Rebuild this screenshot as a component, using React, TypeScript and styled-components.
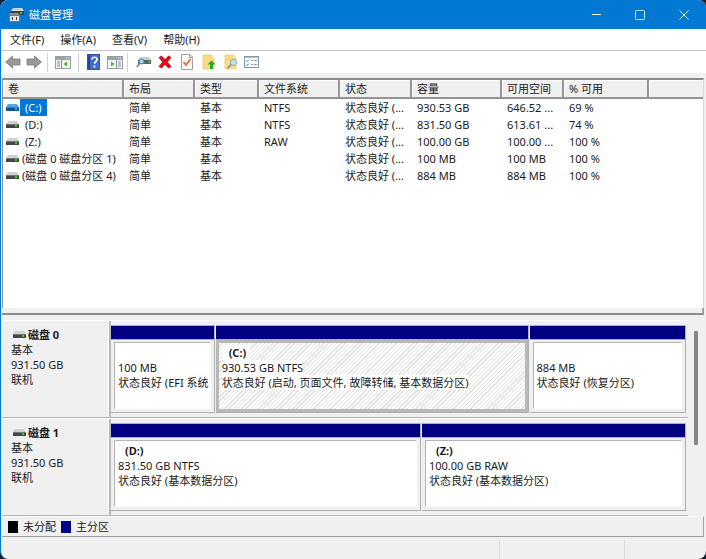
import React from 'react';
import styled, { createGlobalStyle, css } from 'styled-components';

const Global = createGlobalStyle`
  * { box-sizing: border-box; }
  html, body, #root { height: 100%; margin: 0; }
  body { background: #14202e; color: #1a1a1a; font: 11px/15px "Noto Sans", "Noto Sans CJK SC", sans-serif; }
  button { font: inherit; color: inherit; border: 0; padding: 0; background: none; }
`;

const Window = styled.div`
  height: 100vh;
  display: flex;
  flex-direction: column;
  background: #f0f0f0;
  border-left: 1px solid #0078d7;
  border-radius: 8px;
  overflow: hidden;
`;
const TitleBar = styled.header`
  height: 29px;
  flex: none;
  display: flex;
  align-items: center;
  background: #0078d4;
  color: #fff;
  padding-left: 7px;
  h1 { flex: 1; margin: 0 0 0 5px; font-size: 11px; font-weight: 400; }
`;
const Caption = styled.button`
  width: 44px;
  height: 29px;
  display: grid;
  place-items: center;
`;
const MenuBar = styled.nav`
  height: 22px;
  flex: none;
  display: flex;
  align-items: center;
  gap: 16px;
  padding-left: 9px;
  background: #fff;
  border-bottom: 1px solid #c4c4c4;
`;
const ToolBar = styled.div`
  height: 22px;
  flex: none;
  display: flex;
  align-items: center;
  padding-left: 4px;
  background: #fff;
`;
const Tool = styled.button<{ $w?: number }>`
  width: ${p => p.$w ?? 22}px;
  height: 20px;
  display: grid;
  place-items: center;
`;
const Separator = styled.span<{ $gap?: number }>`
  width: 1px;
  height: 19px;
  background: #d0d0d0;
  margin: 0 ${p => p.$gap ?? 0}px;
`;
const ListPane = styled.section`
  flex: 1 1 0;
  min-height: 0;
  margin: 5px 2px 0 1px;
  border: solid #8c8c8c;
  border-width: 2px 0 0 1px;
  border-right: 1px solid #d8d8d8;
  background: #fff;
  overflow: hidden;
`;
const Volumes = styled.table`
  width: 100%;
  table-layout: fixed;
  border-collapse: separate;
  border-spacing: 0;
  th {
    height: 19px;
    padding: 0 0 0 5px;
    text-align: left;
    font-weight: 400;
    background: #f0f0f0;
    border-right: 2px solid #949494;
    border-bottom: 2px solid #949494;
    box-shadow: inset 1px 1px #fff;
  }
  th:last-child { border-right: 0; }
  td { height: 17px; padding: 0 0 0 5px; white-space: nowrap; }
  td:first-child { padding-left: 3px; }
`;
const VolumeName = styled.span<{ $selected?: boolean; $long?: boolean }>`
  display: flex;
  align-items: center;
  gap: 1px;
  span {
    padding: 1px 5px 1px ${p => (p.$long ? 2 : 5)}px;
    ${p => p.$selected && css`background: #0078d7; color: #fff;`}
  }
`;
const Splitter = styled.div`
  height: 7px;
  flex: none;
  margin: 0 2px 0 1px;
  border-bottom: 2px solid #8c8c8c;
  border-right: 2px solid #a0a0a0;
`;
const DiskPane = styled.section`
  flex: none;
  display: flex;
  margin-left: 1px;
`;
const Disks = styled.div`
  flex: 1;
  min-width: 0;
  padding-top: 5px;
`;
const Disk = styled.article`
  height: 98px;
  display: flex;
  border-top: 1px solid #fff;
  border-bottom: 1px solid #b4b4b4;
`;
const DiskInfo = styled.div`
  width: 109px;
  flex: none;
  padding: 6px 0 0 9px;
  border-right: 2px solid #b8b8b8;
  box-shadow: inset -1px 0 #fff;
  h2 { margin: 0; font-size: 11px; line-height: 15px; display: flex; align-items: center; gap: 2px; padding-left: 2px; }
  p { margin: 0; }
`;
const Partitions = styled.div`
  flex: 1;
  min-width: 0;
  display: flex;
  gap: 1px;
  padding: 4px 2px 4px 0;
`;
const Partition = styled.div<{ $grow: number }>`
  flex: ${p => p.$grow} 1 0;
  min-width: 0;
  display: flex;
  flex-direction: column;
  border-right: 1px solid #b0b0b0;
  border-bottom: 1px solid #b0b0b0;
`;
const Band = styled.div`
  height: 15px;
  flex: none;
  background: #000080;
  border: 1px solid #b0b0b0;
  border-width: 1px 0;
`;
const Body = styled.div<{ $selected?: boolean }>`
  flex: 1;
  padding: 2px 3px 0;
  margin: 2px 3px 3px;
  overflow: hidden;
  white-space: nowrap;
  background: #fff;
  border: 1px solid #b4b4b4;
  border-right-color: #fff;
  border-bottom-color: #fff;
  ${p => p.$selected && css`
    margin: 0;
    padding: 2px 3px 0;
    border: 3px solid #b8b8b8;
    background: repeating-linear-gradient(135deg, #fff 0 2px, #e0e0e0 2px 3px);
  `}
`;
const Line = styled.div<{ $title?: boolean }>`
  height: 15px;
  span { display: inline-block; background: #fff; ${p => p.$title && css`padding: 0 4px 0 7px; font-weight: 700;`} }
`;
const ScrollTrack = styled.div`
  width: 18px;
  flex: none;
  padding: 16px 0 0 6px;
`;
const Thumb = styled.div`
  width: 4px;
  height: 114px;
  border-radius: 1px;
  background: #858585;
`;
const Legend = styled.div`
  height: 21px;
  flex: none;
  display: flex;
  align-items: center;
  gap: 5px;
  padding-left: 6px;
  margin: 0 2px 0 1px;
  border-top: 1px solid #fff;
  border-right: 1px solid #a0a0a0;
  border-bottom: 1px solid #a0a0a0;
`;
const Swatch = styled.i<{ $color: string }>`
  width: 10px;
  height: 12px;
  background: ${p => p.$color};
`;
const StatusBar = styled.footer`
  height: 22px;
  flex: none;
  display: grid;
  grid-template-columns: 1fr 125px 81px;
  padding-top: 3px;
  span { border-right: 1px solid #dcdcdc; }
  span:last-child { border: 0; }
`;

const DriveIcon = ({ blue = false }: { blue?: boolean }) => (
  <svg width="13" height="9" viewBox="0 0 13 9" aria-hidden="true">
    <path d="M2 1h9l2 3H0z" fill={blue ? '#5ba4e0' : '#d0d0d0'} />
    <rect y="4" width="13" height="4" rx="0.5" fill={blue ? '#0c5796' : '#454545'} />
    <rect y="4" width="13" height="1" fill={blue ? '#2780c8' : '#777'} />
    <rect x="9" y="5" width="2" height="2" fill={blue ? '#2fb4b0' : '#2bd02b'} />
  </svg>
);
const AppIcon = () => (
  <svg width="16" height="16" viewBox="0 0 16 16" aria-hidden="true">
    <path d="M5 1h9l2 3H3z" fill="#d0d4d6" />
    <path d="M3 4h13v4H3z" fill="#3f4346" />
    <path d="M12 5h2v2h-2z" fill="#36c13a" />
    <path d="M2 6h8l2 3H1z" fill="#8c9092" />
    <path d="M1.500 8.500h10v6h-10z" fill="#e4e4e4" stroke="#777" />
    <path d="M4 10h1v3H4zM8 10h1v3H8z" fill="#444" />
  </svg>
);
const Arrow = ({ right = false }: { right?: boolean }) => (
  <svg width="16" height="14" viewBox="0 0 16 14" aria-hidden="true">
    <path d={right ? 'M15.500 7 8.500 1v3H1v6h7.500v3z' : 'M.5 7 7.500 1v3H15v6H7.500v3z'} fill="#999" stroke="#777" strokeWidth="0.8" />
  </svg>
);
const PaneIcon = ({ right = false }: { right?: boolean }) => (
  <svg width="16" height="13" viewBox="0 0 16 13" aria-hidden="true">
    <rect x="0.500" y="0.500" width="15" height="12" fill="#f4f4f4" stroke="#98a0a6" />
    <path d="M1 1h14v3H1z" fill="#9ba3ab" />
    <path d="M11 2h1M13 2h1" stroke="#fff" />
    <path d={right ? 'M11 6h3M11 8h3M11 10h3' : 'M2 6h3M2 8h3M2 10h3'} stroke="#8a929a" />
    <path d={right ? 'M9.500 4v8' : 'M6.500 4v8'} stroke="#8a929a" />
    <path d={right ? 'M4 5.500v5L7.500 8z' : 'M12 5.500v5L8.500 8z'} fill="#3cb62c" />
  </svg>
);
const HelpIcon = () => (
  <svg width="13" height="16" viewBox="0 0 13 16" aria-hidden="true">
    <rect x="0.500" y="0.500" width="12" height="15" fill="#4169cf" stroke="#3355a8" />
    <path d="M1 1h2v14H1z" fill="#2646a0" />
    <path d="M5 5.500C5 2.500 10 2.500 10 5.500c0 2-2.500 2-2.500 4.300M7.500 11.500v2" fill="none" stroke="#fff" strokeWidth="1.700" />
  </svg>
);
const ConnectIcon = () => (
  <svg width="15" height="12" viewBox="0 0 15 12" aria-hidden="true">
    <path d="M4 1h9l2 3H2z" fill="#c8ced2" />
    <path d="M2 4h13v4H2z" fill="#56646b" />
    <path d="M12 5h2v2h-2z" fill="#2bd02b" />
    <circle cx="5.500" cy="5.500" r="2.500" fill="#a8d2ea" stroke="#5a7f98" />
    <path d="M3.500 7.500.8 11" stroke="#77838a" strokeWidth="1.600" />
  </svg>
);
const DeleteIcon = () => (
  <svg width="14" height="14" viewBox="0 0 14 14" aria-hidden="true">
    <path d="M3.500.500 7 4.300 10.500.500 13.500 2.500 9.700 7 13.500 11.500 10.500 13.500 7 9.700 3.500 13.500.500 11.500 4.300 7 .500 2.500z" fill="#d8101c" />
  </svg>
);
const CheckIcon = () => (
  <svg width="12" height="16" viewBox="0 0 12 16" aria-hidden="true">
    <path d="M.5.500H9l2.500 2.500v12.500H.5z" fill="#fafafa" stroke="#a0a0a0" />
    <path d="M8.500.500V3.500h3" fill="none" stroke="#a0a0a0" />
    <path d="m2.500 8 2.500 3 4.500-6" fill="none" stroke="#ee6c35" strokeWidth="1.800" />
  </svg>
);
const FolderIcon = ({ search = false }: { search?: boolean }) => (
  <svg width="14" height="16" viewBox="0 0 14 16" aria-hidden="true">
    <path d="M1 1h9v3h2v11H1z" fill="#f8dc80" stroke="#e8cb78" strokeWidth="0.800" />
    {search ? (
      <g>
        <path d="M7 10.500 3.500 14.500" stroke="#8a9298" strokeWidth="1.800" />
        <circle cx="9.500" cy="8.500" r="3" fill="#c6e3f4" stroke="#86a7bb" />
      </g>
    ) : (
      <path d="M9.500 6.500 13.500 10.500H11V15H8v-4.500H5.500z" fill="#27ad27" />
    )}
  </svg>
);
const ListIcon = () => (
  <svg width="15" height="12" viewBox="0 0 15 12" aria-hidden="true">
    <rect x="0.500" y="0.500" width="14" height="11" fill="#fff" stroke="#8497a8" />
    <path d="M1 1.500h13" stroke="#b4c0ca" />
    <path d="m2 4.500 1 1 2-2M2 8.500l1 1 2-2" fill="none" stroke="#2f76bd" />
    <path d="M7 4.500h2M10 4.500h3M7 8.500h2M10 8.500h3" stroke="#8b98a3" />
  </svg>
);

const columns: [string, number | undefined][] = [
  ['卷', 121], ['布局', 71], ['类型', 64], ['文件系统', 81], ['状态', 72],
  ['容量', 90], ['可用空间', 62], ['% 可用', 85], ['', undefined],
];
const volumes = [
  ['(C:)', '简单', '基本', 'NTFS', '状态良好 (...', '930.53 GB', '646.52 ...', '69 %'],
  ['(D:)', '简单', '基本', 'NTFS', '状态良好 (...', '831.50 GB', '613.61 ...', '74 %'],
  ['(Z:)', '简单', '基本', 'RAW', '状态良好 (...', '100.00 GB', '100.00 ...', '100 %'],
  ['(磁盘 0 磁盘分区 1)', '简单', '基本', '', '状态良好 (...', '100 MB', '100 MB', '100 %'],
  ['(磁盘 0 磁盘分区 4)', '简单', '基本', '', '状态良好 (...', '884 MB', '884 MB', '100 %'],
];
type Part = { grow: number; title?: string; size: string; status: string; selected?: boolean };
const disks: { name: string; parts: Part[] }[] = [
  {
    name: '磁盘 0',
    parts: [
      { grow: 103, size: '100 MB', status: '状态良好 (EFI 系统' },
      { grow: 313, title: '(C:)', size: '930.53 GB NTFS', status: '状态良好 (启动, 页面文件, 故障转储, 基本数据分区)', selected: true },
      { grow: 156, size: '884 MB', status: '状态良好 (恢复分区)' },
    ],
  },
  {
    name: '磁盘 1',
    parts: [
      { grow: 310, title: '(D:)', size: '831.50 GB NTFS', status: '状态良好 (基本数据分区)' },
      { grow: 264, title: '(Z:)', size: '100.00 GB RAW', status: '状态良好 (基本数据分区)' },
    ],
  },
];

export default function App() {
  return (
    <>
      <Global />
      <Window>
        <TitleBar>
          <AppIcon />
          <h1>磁盘管理</h1>
          <Caption aria-label="最小化"><svg width="9" height="9"><path d="M0 4.500h9" stroke="#fff" /></svg></Caption>
          <Caption aria-label="最大化"><svg width="10" height="10"><rect x="0.500" y="0.500" width="9" height="9" rx="1" fill="none" stroke="#d4e8f8" /></svg></Caption>
          <Caption aria-label="关闭"><svg width="10" height="10"><path d="m.5.500 9 9m0-9-9 9" stroke="#e4f0fa" /></svg></Caption>
        </TitleBar>
        <MenuBar>
          {['文件(F)', '操作(A)', '查看(V)', '帮助(H)'].map(m => <button key={m}>{m}</button>)}
        </MenuBar>
        <ToolBar>
          <Tool $w={16} aria-label="后退"><Arrow /></Tool>
          <Tool $w={26} aria-label="前进"><Arrow right /></Tool>
          <Separator />
          <Tool $w={30} aria-label="显示控制台树"><PaneIcon /></Tool>
          <Separator />
          <Tool $w={28} aria-label="帮助"><HelpIcon /></Tool>
          <Tool $w={16} aria-label="显示操作窗格"><PaneIcon right /></Tool>
          <Separator $gap={4} />
          <Tool aria-label="连接"><ConnectIcon /></Tool>
          <Tool aria-label="删除"><DeleteIcon /></Tool>
          <Tool aria-label="属性"><CheckIcon /></Tool>
          <Tool aria-label="打开"><FolderIcon /></Tool>
          <Tool aria-label="浏览"><FolderIcon search /></Tool>
          <Tool $w={18} aria-label="列表"><ListIcon /></Tool>
        </ToolBar>
        <ListPane>
          <Volumes>
            <colgroup>{columns.map(([c, w]) => <col key={c} width={w} />)}</colgroup>
            <thead><tr>{columns.map(([c]) => <th key={c}>{c}</th>)}</tr></thead>
            <tbody>
              {volumes.map((row, i) => (
                <tr key={row[0]}>
                  {row.map((cell, j) => (
                    <td key={j}>
                      {j ? cell : (
                        <VolumeName $selected={i === 0} $long={i > 2}>
                          <DriveIcon blue={i === 0} /><span>{cell}</span>
                        </VolumeName>
                      )}
                    </td>
                  ))}
                </tr>
              ))}
            </tbody>
          </Volumes>
        </ListPane>
        <Splitter />
        <DiskPane>
          <Disks>
            {disks.map(disk => (
              <Disk key={disk.name}>
                <DiskInfo>
                  <h2><DriveIcon />{disk.name}</h2>
                  <p>基本</p><p>931.50 GB</p><p>联机</p>
                </DiskInfo>
                <Partitions>
                  {disk.parts.map(part => (
                    <Partition key={part.size} $grow={part.grow}>
                      <Band />
                      <Body $selected={part.selected}>
                        <Line $title>{part.title && <span>{part.title}</span>}</Line>
                        <Line><span>{part.size}</span></Line>
                        <Line><span>{part.status}</span></Line>
                      </Body>
                    </Partition>
                  ))}
                </Partitions>
              </Disk>
            ))}
          </Disks>
          <ScrollTrack><Thumb /></ScrollTrack>
        </DiskPane>
        <Legend>
          <Swatch $color="#000" />未分配
          <Swatch $color="#000080" />主分区
        </Legend>
        <StatusBar><span /><span /><span /></StatusBar>
      </Window>
    </>
  );
}
